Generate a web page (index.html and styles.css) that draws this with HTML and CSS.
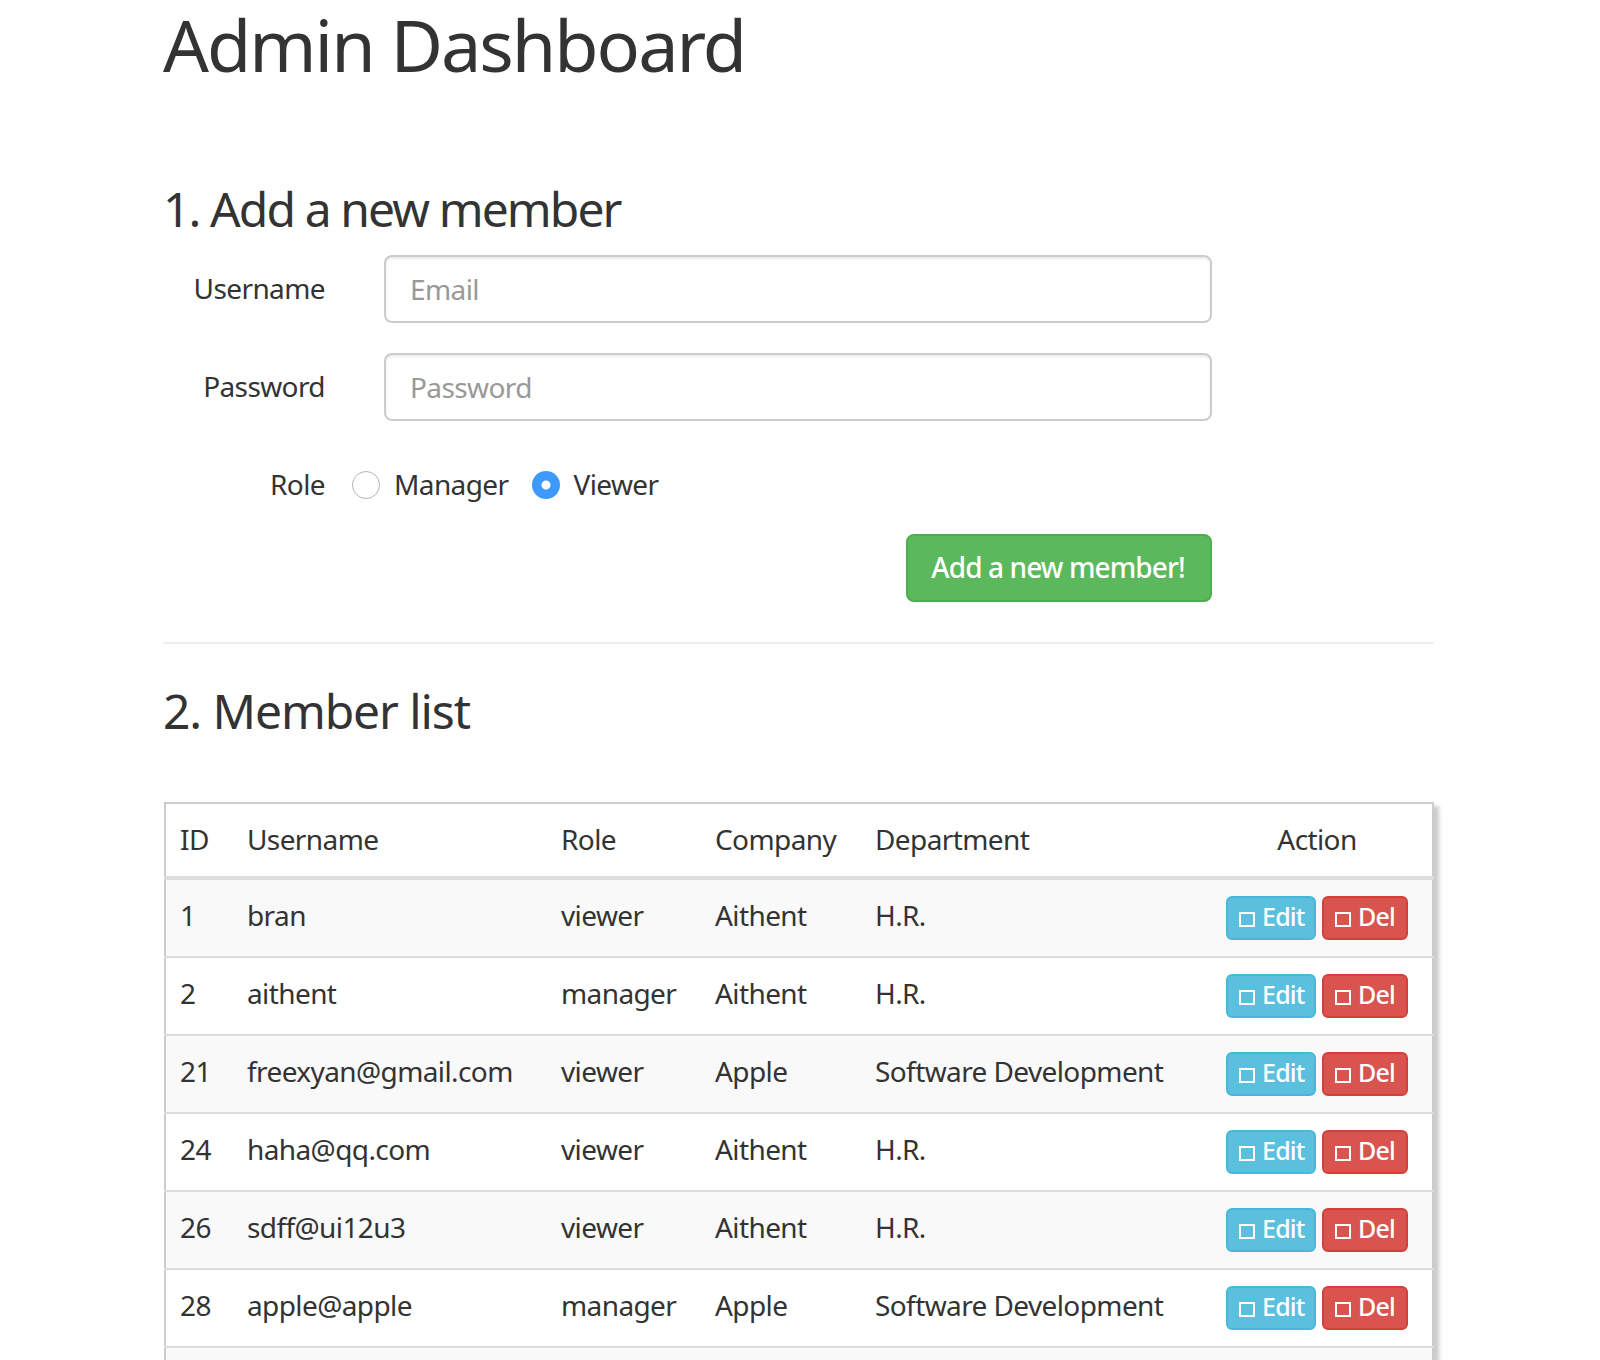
FILE: index.html
```html
<!DOCTYPE html>
<html lang="en">
<head>
<meta charset="utf-8">
<title>Admin Dashboard</title>
<link rel="stylesheet" href="styles.css">
</head>
<body>
<main class="page">
  <h1 class="title">Admin Dashboard</h1>
  <h2 class="section-first">1. Add a new member</h2>
  <form class="form">
    <div class="form-row">
      <label class="form-label">Username</label>
      <input class="field" type="text" placeholder="Email">
    </div>
    <div class="form-row">
      <label class="form-label">Password</label>
      <input class="field" type="password" placeholder="Password">
    </div>
    <div class="form-row role-row">
      <span class="form-label">Role</span>
      <div class="radios">
        <span class="radio"></span><span class="radio-text">Manager</span>
        <span class="radio radio-on"></span><span class="radio-text">Viewer</span>
      </div>
    </div>
    <div class="submit-row"><button type="button" class="btn-add">Add a new member!</button></div>
  </form>
  <hr class="rule">
  <h2 class="section-second">2. Member list</h2>
  <table class="members">
    <colgroup><col class="c-id"><col class="c-user"><col class="c-role"><col class="c-company"><col class="c-dept"><col class="c-action"></colgroup>
    <thead>
      <tr><th>ID</th><th>Username</th><th>Role</th><th>Company</th><th>Department</th><th class="action-head">Action</th></tr>
    </thead>
    <tbody>
      <tr><td>1</td><td>bran</td><td>viewer</td><td>Aithent</td><td>H.R.</td><td class="actions"><button type="button" class="btn btn-edit"><span class="box"></span>Edit</button><button type="button" class="btn btn-del"><span class="box"></span>Del</button></td></tr>
      <tr><td>2</td><td>aithent</td><td>manager</td><td>Aithent</td><td>H.R.</td><td class="actions"><button type="button" class="btn btn-edit"><span class="box"></span>Edit</button><button type="button" class="btn btn-del"><span class="box"></span>Del</button></td></tr>
      <tr><td>21</td><td>freexyan@gmail.com</td><td>viewer</td><td>Apple</td><td>Software Development</td><td class="actions"><button type="button" class="btn btn-edit"><span class="box"></span>Edit</button><button type="button" class="btn btn-del"><span class="box"></span>Del</button></td></tr>
      <tr><td>24</td><td>haha@qq.com</td><td>viewer</td><td>Aithent</td><td>H.R.</td><td class="actions"><button type="button" class="btn btn-edit"><span class="box"></span>Edit</button><button type="button" class="btn btn-del"><span class="box"></span>Del</button></td></tr>
      <tr><td>26</td><td>sdff@ui12u3</td><td>viewer</td><td>Aithent</td><td>H.R.</td><td class="actions"><button type="button" class="btn btn-edit"><span class="box"></span>Edit</button><button type="button" class="btn btn-del"><span class="box"></span>Del</button></td></tr>
      <tr><td>28</td><td>apple@apple</td><td>manager</td><td>Apple</td><td>Software Development</td><td class="actions"><button type="button" class="btn btn-edit"><span class="box"></span>Edit</button><button type="button" class="btn btn-del"><span class="box"></span>Del</button></td></tr>
      <tr class="cut-row"><td></td><td></td><td></td><td></td><td></td><td></td></tr>
    </tbody>
  </table>
</main>
</body>
</html>
```
FILE: styles.css
```css
html, body { margin: 0; padding: 0; height: 1360px; overflow: hidden; background: #fff; }
body { font-family: "Noto Sans", "Open Sans", sans-serif; color: #333; font-size: 28px; }
.page { margin: 0 166px 0 163px; }
.title { margin: 0; font-size: 72px; font-weight: 400; line-height: 88px; letter-spacing: -2px; }
h2 { margin: 0; font-size: 48px; font-weight: 400; line-height: 60px; }
.section-first { margin-top: 91px; letter-spacing: -1.9px; }
.form { margin-top: 16px; width: 1049px; }
.form-row { display: flex; align-items: center; height: 68px; margin-bottom: 30px; }
.form-label { width: 162px; text-align: right; margin-right: 59px; padding-bottom: 2px; font-size: 28px; letter-spacing: -0.6px; }
.field { flex: 1; height: 68px; box-sizing: border-box; border: 2px solid #ccc; border-radius: 8px; padding: 0 24px; font: inherit; color: #555; letter-spacing: -0.6px; box-shadow: inset 0 2px 2px rgba(0,0,0,.075); }
.field::placeholder { color: #999; opacity: 1; }
.role-row { margin-bottom: 15px; }
.role-row .form-label { margin-right: 0; }
.radios { display: flex; align-items: center; margin-left: 27px; letter-spacing: -0.6px; }
.radio { width: 28px; height: 28px; box-sizing: border-box; border-radius: 50%; border: 1px solid #b4b4b4; background: #fff; margin-right: 14px; }
.radio-text { margin-right: 23px; padding-bottom: 2px; }
.radio-on { background: radial-gradient(circle, #fff 0, #fff 4px, #3d99fc 5px); border: 0; }
.submit-row { display: flex; justify-content: flex-end; }
.btn-add { width: 306px; height: 68px; border: 2px solid #4cae4c; border-radius: 8px; background: #5cb85c; color: #fff; font: inherit; font-weight: 500; letter-spacing: -0.9px; padding: 0 2px 2px 0; }
.rule { border: 0; border-top: 2px solid #eee; margin: 40px 0 0; }
.section-second { margin-top: 37px; letter-spacing: -1.1px; }
.members { margin-top: 61px; margin-left: 1px; width: 1268px; table-layout: fixed; border-collapse: collapse; border: 2px solid #ccc; box-shadow: 5px 4px 4px #ccc; letter-spacing: -0.6px; }
.c-id { width: 66px; } .c-user { width: 314px; } .c-role { width: 154px; } .c-company { width: 160px; } .c-dept { width: 351px; } .c-action { width: 223px; }
th { padding: 0 16px 2px; text-align: left; font-weight: 400; }
td { padding: 0 16px 7px; text-align: left; font-weight: 400; }
th:first-child, td:first-child { padding-left: 14px; }
thead tr { height: 75px; border-bottom: 4px solid #ddd; }
tbody tr { height: 78px; border-bottom: 2px solid #ddd; }
tbody tr:first-child { height: 79px; }
tbody tr:nth-child(odd) { background: #f9f9f9; }
th.action-head { text-align: center; padding-right: 24px; }
td.actions { padding: 0 22px 0 16px; white-space: nowrap; }
.btn { display: inline-flex; align-items: center; vertical-align: middle; height: 44px; box-sizing: border-box; border-radius: 6px; border: 2px solid; padding: 0 0 4px 11px; color: #fff; font: inherit; font-size: 25px; font-weight: 500; letter-spacing: -0.8px; }
.btn + .btn { margin-left: 6px; }
.btn-edit { width: 90px; background: #5bc0de; border-color: #46b8da; }
.btn-del { width: 86px; background: #d9534f; border-color: #d43f3a; }
.box { width: 16px; height: 15px; box-sizing: border-box; border: 2px solid #fff; margin: 7px 7px 0 0; flex: none; }
.cut-row { background: #f9f9f9; }
```
